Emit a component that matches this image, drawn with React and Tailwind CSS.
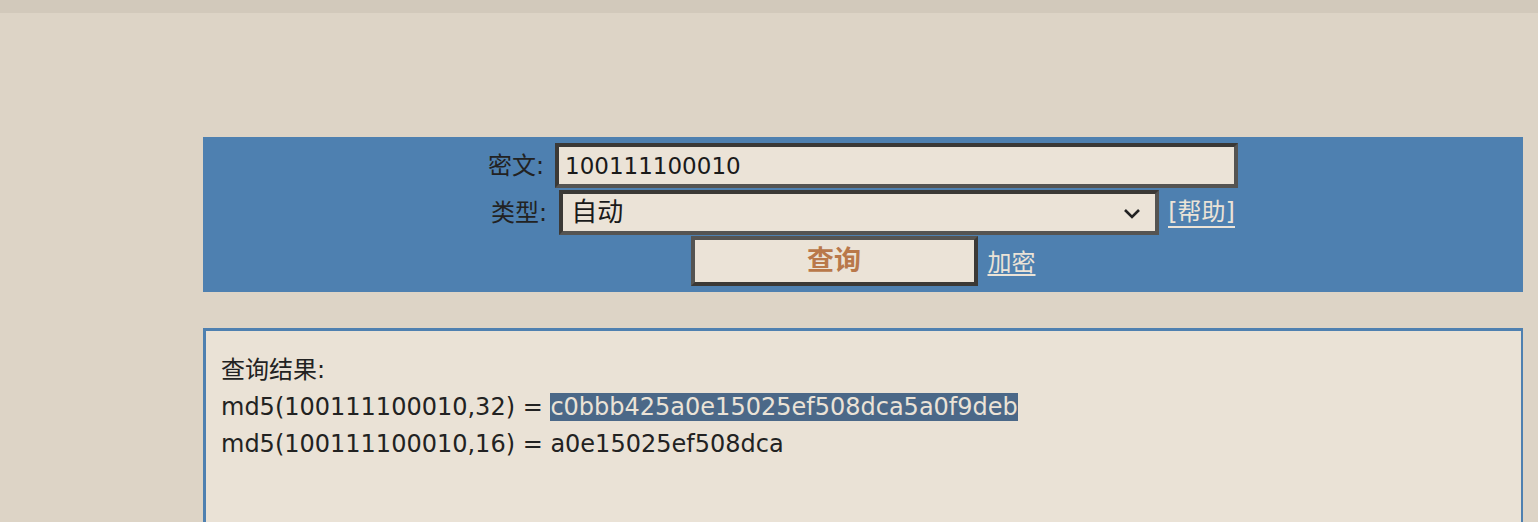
import React from 'react';

const sans = "font-['DejaVu_Sans','Noto_Sans_CJK_SC',sans-serif]";

export default function App() {
  return (
    <div className={`min-h-[522px] bg-[#ddd4c6] text-[#222] ${sans}`}>
      <div className="h-[13px] bg-[#d2c9bb]" />

      {/* query form */}
      <div className="ml-[203px] mt-[124px] w-[1320px] bg-[#4e80b0] pt-[6px] pb-[6px] flex flex-col items-center">
        <div className="flex items-center">
          <span className="text-[24px] text-[#222] mr-[11px]">密文:</span>
          <div className="w-[683px] h-[45px] bg-[#ebe3d7] border-4 border-t-[#3b3936] border-l-[#3b3936] border-b-[#555452] border-r-[#555452] flex items-center px-[6px] pt-[2px] text-[23px] text-[#1a1a1a]">
            100111100010
          </div>
        </div>
        <div className="flex items-center mt-[2px]">
          <span className="text-[24px] text-[#222] mr-[12px]">类型:</span>
          <div className="relative w-[600px] h-[45px] bg-[#ebe3d7] border-4 border-t-[#3b3936] border-l-[#3b3936] border-b-[#555452] border-r-[#555452] flex items-center pl-[8px] text-[26px] text-[#1a1a1a]">
            自动
            <svg className="absolute right-[14px] top-[14px]" width="18" height="12" viewBox="0 0 18 12">
              <path d="M2 2 L9 9 L16 2" stroke="#222" strokeWidth="2.6" fill="none" />
            </svg>
          </div>
          <a className="ml-[9px] mt-[2px] text-[24px] leading-[27px] text-[#ebe3d7] border-b-2 border-[#ebe3d7]">[帮助]</a>
        </div>
        <div className="flex items-center mt-[1px]">
          <button className="w-[287px] h-[50px] bg-[#ebe3d7] border-4 border-t-[#555452] border-l-[#555452] border-b-[#3b3936] border-r-[#3b3936] text-[27px] font-bold text-[#b9784a]">
            查询
          </button>
          <a className="ml-[10px] text-[24px] text-[#ebe3d7] underline decoration-skip-ink-none underline-offset-[3px] mt-[3px]">加密</a>
        </div>
      </div>

      {/* result */}
      <div className="ml-[203px] mt-[36px] w-[1320px] h-[200px] bg-[#eae2d6] border-[3px] border-r-2 border-[#4e80b0] pl-[15px] pt-[21px] text-[24px] leading-[37px] text-[#222]">
        <div>查询结果:</div>
        <div>
          md5(100111100010,32) = <span className="bg-[#4b6888] text-[#ebe3d7]">c0bbb425a0e15025ef508dca5a0f9deb</span>
        </div>
        <div>md5(100111100010,16) = a0e15025ef508dca</div>
      </div>
    </div>
  );
}
